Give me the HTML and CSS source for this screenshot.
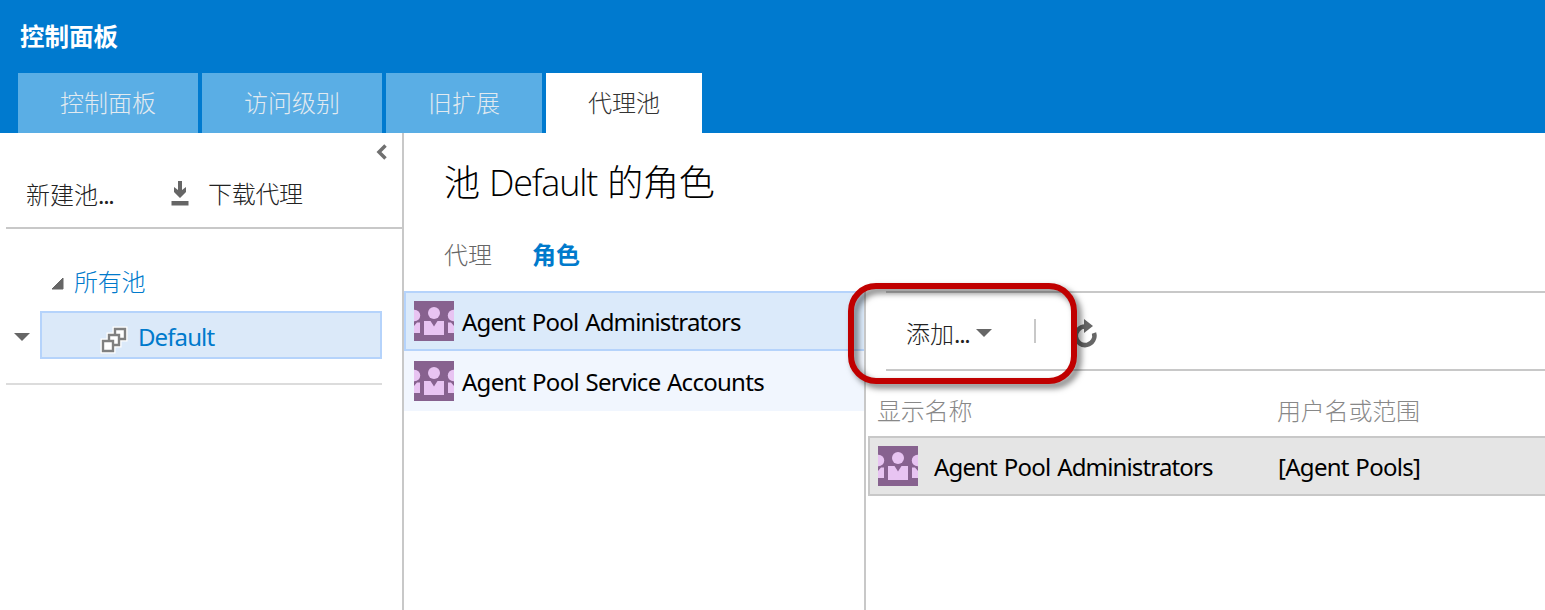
FILE: index.html
```
<!DOCTYPE html>
<html lang="zh-CN">
<head>
<meta charset="utf-8">
<title>控制面板</title>
<link rel="stylesheet" href="styles.css">
</head>
<body>
<svg class="defs" width="0" height="0" aria-hidden="true">
  <symbol id="group" viewBox="0 0 40 40">
    <rect width="40" height="40" fill="#87628f"/>
    <g fill="#e8c4f2">
      <circle cx="20" cy="12" r="6"/>
      <path d="M10 20h6.500l3.500 5.500L23.500 20H30v14H10z"/>
      <circle cx="0.500" cy="14.500" r="5.700"/>
      <circle cx="39.500" cy="14.500" r="5.700"/>
      <path d="M0 25l3-3.500h3V32H0zM40 25l-3-3.500h-3V32h6z"/>
    </g>
  </symbol>
</svg>
<header class="header">
  <h1 class="brand">控制面板</h1>
  <nav class="tabs">
    <a class="tab">控制面板</a>
    <a class="tab">访问级别</a>
    <a class="tab">旧扩展</a>
    <a class="tab active">代理池</a>
  </nav>
</header>
<main class="main">
  <aside class="sidebar">
    <div class="collapse"><svg width="12" height="16" viewBox="0 0 12 16"><path d="M9.500 1.500L3 8l6.500 6.500" fill="none" stroke="#707070" stroke-width="3.500"/></svg></div>
    <div class="side-tools">
      <span class="new-pool">新建池<span class="dots">...</span></span>
      <svg class="download" width="18" height="26" viewBox="0 0 18 26"><path d="M7 0h4v9l4-3v5l-6 6-6-6V6l4 3zM.500 20h17v4.500H.500z" fill="#666"/></svg>
      <span>下载代理</span>
    </div>
    <div class="tree">
      <div class="root"><svg width="13" height="13" viewBox="0 0 13 13"><path d="M12 1v11H1z" fill="#666" stroke="#666"/></svg><span>所有池</span></div>
      <div class="node-row">
        <svg class="node-arrow" width="18" height="10" viewBox="0 0 18 10"><path d="M1 1h16L9 9z" fill="#666"/></svg>
        <div class="node">
          <svg width="28" height="28" viewBox="0 0 28 28"><g fill="#fff" stroke="#fff" stroke-width="5"><path d="M15 3h10v10H15zM9 9h10v10H9zM3 15h10v10H3z"/></g><g fill="#fff" stroke="#808080" stroke-width="2.400"><path d="M15 3h10v10H15z"/><path d="M9 9h10v10H9z"/><path d="M3 15h10v10H3z"/></g></svg>
          <span class="node-name">Default</span>
        </div>
      </div>
    </div>
  </aside>
  <section class="content">
    <h2 class="title">池 <span class="title-name">Default</span> 的角色</h2>
    <nav class="subtabs"><a>代理</a><a class="current">角色</a></nav>
    <div class="panes">
      <div class="roles">
        <div class="role selected"><svg class="avatar"><use href="#group"/></svg><span class="admins">Agent Pool Administrators</span></div>
        <div class="role"><svg class="avatar"><use href="#group"/></svg><span class="services">Agent Pool Service Accounts</span></div>
      </div>
      <div class="members">
        <div class="toolbar">
          <span class="add">添加<span class="dots">...</span></span>
          <svg class="add-arrow" width="18" height="10" viewBox="0 0 18 10"><path d="M1 1h16L9 9z" fill="#666"/></svg>
          <i class="divider"></i>
          <svg class="refresh" width="26" height="30" viewBox="0 0 26 30"><path d="M13 7.500A9.300 9.300 0 1 0 22 14" fill="none" stroke="#666" stroke-width="4.500"/><path d="M12 0l9 7-9 7z" fill="#666"/></svg>
          <div class="callout"></div>
        </div>
        <div class="thead"><span>显示名称</span><span>用户名或范围</span></div>
        <div class="member"><svg class="avatar"><use href="#group"/></svg><span class="member-name"><span class="admins">Agent Pool Administrators</span></span><span class="scope">[Agent Pools]</span></div>
      </div>
    </div>
  </section>
</main>
</body>
</html>
```
FILE: styles.css
```
* { box-sizing: border-box; }
body {
  margin: 0; height: 610px; overflow: hidden; background: #fff; color: #000;
  font: 300 24px/32px "Noto Sans", "Noto Sans CJK SC", sans-serif;
  display: flex; flex-direction: column; white-space: nowrap;
}
.defs { position: absolute; }
svg { display: block; flex: none; }
.header { height: 133px; flex: none; background: #007acf; padding: 21px 18px 0; }
.brand { margin: 0 0 20px 2px; font-size: 24.500px; line-height: 32px; font-weight: 700; color: #fff; }
.tabs { display: flex; gap: 4px; }
.tab { height: 60px; padding: 14px 42px 0; background: #5aaee5; color: #e2eaf0; }
.tab.active { background: #fff; color: #333; }
.main { flex: 1; display: flex; min-height: 0; }
.sidebar { width: 404px; flex: none; border-right: 2px solid #c8c8c8; padding-left: 6px; }
.collapse { height: 40px; display: flex; justify-content: flex-end; padding: 11px 14px 0 0; }
.side-tools { height: 56px; border-bottom: 2px solid #c8c8c8; display: flex; padding: 6px 0 0 20px; color: #222; }
.side-tools > span:last-child { margin-top: -1px; letter-spacing: -.300px; }
.new-pool { width: 145px; }
.dots { letter-spacing: -1.300px; font-weight: 400; }
.download { margin: 2px 19px 0 0; }
.tree { width: 376px; height: 156px; padding-top: 37px; border-bottom: 2px solid #dcdcdc; }
.root { display: flex; align-items: center; gap: 10px; padding-left: 45px; color: #007acc; height: 32px; letter-spacing: -.300px; }
.root svg { margin-top: 3px; }
.node-row { display: flex; align-items: center; gap: 9px; margin-top: 13px; padding-left: 7px; }
.node-arrow { margin-top: 4px; }
.node { flex: 1; height: 48px; background: #dbe9f9; border: 2px solid #b5d3fb; display: flex; align-items: center; padding-left: 58px; color: #007acc; gap: 10px; }
.node svg { margin-top: 9px; }
.node-name { font-weight: 400; margin-top: 3px; letter-spacing: -.900px; }
.content { flex: 1; min-width: 0; display: flex; flex-direction: column; }
.title { height: 98px; margin: 0; padding: 24px 0 0 40px; font-size: 36px; line-height: 52px; font-weight: 300; letter-spacing: -.200px; }
.title-name { font-family: "Open Sans", "Noto Sans", sans-serif; letter-spacing: -1.200px; margin-right: 1px; }
.subtabs { height: 60px; padding: 8px 0 0 40px; display: flex; gap: 40px; color: #666; }
.current { color: #007acc; font-weight: 700; }
.panes { flex: 1; display: flex; }
.roles { width: 462px; border-right: 2px solid #c8c8c8; flex: none; font-weight: 400; }
.role { height: 60px; display: flex; align-items: center; gap: 8px; padding: 0 10px; background: #f1f6fe; }
.role.selected { background: #dbeafa; border: 2px solid #b5d3fb; border-right: 0; padding-left: 8px; }
.role span { padding-top: 1px; }
.admins { letter-spacing: -.850px; word-spacing: 1.600px; }
.services { letter-spacing: -.720px; word-spacing: 1px; }
.avatar { width: 40px; height: 40px; }
.members { flex: 1; min-width: 0; }
.toolbar { position: relative; height: 80px; margin-left: 20px; border: solid #c8c8c8; border-width: 2px 0; display: flex; align-items: center; padding-left: 20px; }
.add { width: 69px; padding-top: 5px; color: #222; }
.add-arrow { margin-top: 4px; }
.divider { width: 2px; height: 24px; background: #c8c8c8; margin: 0 36px 0 41px; }
.refresh { margin-top: 6px; }
.callout { position: absolute; left: -38px; top: -10px; width: 229px; height: 101px; border: 6px solid #c00000; border-radius: 28px; filter: drop-shadow(4px 4px 3px rgba(0,0,0,.55)); }
.thead { display: flex; height: 65px; padding: 24px 0 0 11px; color: #888; letter-spacing: -.200px; }
.thead span:first-child { width: 400px; }
.member { height: 60px; margin-left: 2px; background: #e5e5e5; border: 2px solid #c8c8c8; border-right: 0; padding-left: 8px; display: flex; align-items: center; gap: 16px; font-weight: 400; }
.member-name { width: 328px; padding-top: 1px; }
.scope { padding-top: 1px; letter-spacing: -.700px; word-spacing: 1px; }
```
